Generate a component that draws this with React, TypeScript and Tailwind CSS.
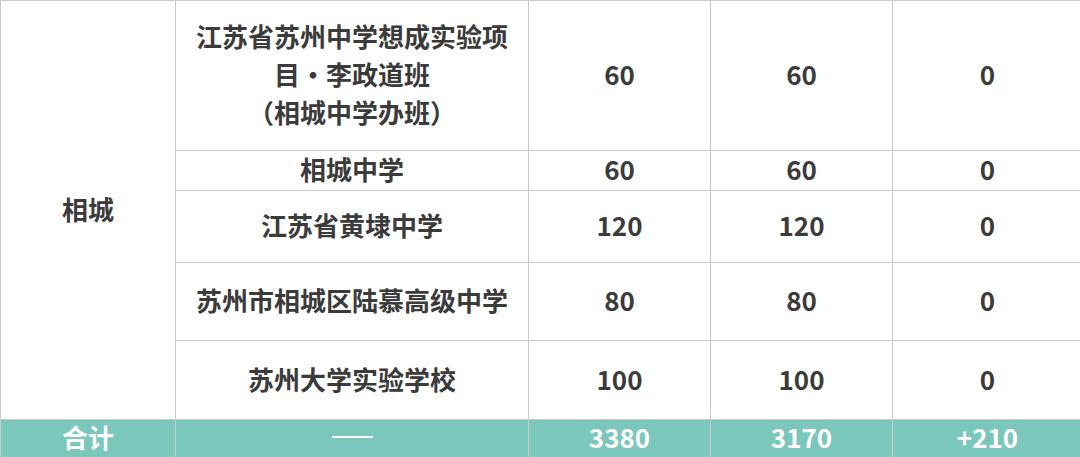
import React from 'react';

const rows = [
  { name: ['江苏省苏州中学想成实验项', '目・李政道班', '（相城中学办班）'], plan: '60', last: '60', diff: '0', h: 'h-[150px]' },
  { name: ['相城中学'], plan: '60', last: '60', diff: '0', h: 'h-[40px]' },
  { name: ['江苏省黄埭中学'], plan: '120', last: '120', diff: '0', h: 'h-[72px]' },
  { name: ['苏州市相城区陆慕高级中学'], plan: '80', last: '80', diff: '0', h: 'h-[78px]' },
  { name: ['苏州大学实验学校'], plan: '100', last: '100', diff: '0', h: 'h-[79px]' },
];

const cell = 'border border-[#cacaca] text-center align-middle px-0 pt-0 pb-[3px] leading-[30px]';

const App: React.FC = () => {
  return (
    <div className="w-[1080px] h-[457px] overflow-hidden bg-white font-['Noto_Sans_CJK_SC',sans-serif] font-bold text-[26px] text-[#3b3b3b]">
      <table className="table-fixed border-collapse w-[1082px]">
        <colgroup>
          <col className="w-[175px]" />
          <col className="w-[353px]" />
          <col className="w-[182px]" />
          <col className="w-[182px]" />
          <col className="w-[190px]" />
        </colgroup>
        <tbody>
          {rows.map((r, i) => (
            <tr key={i} className={r.h}>
              {i === 0 && (
                <td rowSpan={5} className={cell}>
                  相城
                </td>
              )}
              <td className={cell}>
                {r.name.map((line) => (
                  <div key={line} className={r.name.length > 1 ? 'leading-[38px]' : ''}>
                    {line}
                  </div>
                ))}
              </td>
              <td className={cell}>{r.plan}</td>
              <td className={cell}>{r.last}</td>
              <td className={cell}>{r.diff}</td>
            </tr>
          ))}
          {/* 合计 */}
          <tr className="h-[38px] bg-[#7bc7bb] text-white">
            <td className={cell}>合计</td>
            <td className={cell}>
              <div className="mx-auto w-[41px] h-[2px] bg-white" />
            </td>
            <td className={cell}>3380</td>
            <td className={cell}>3170</td>
            <td className={cell}>+210</td>
          </tr>
        </tbody>
      </table>
    </div>
  );
};

export default App;
